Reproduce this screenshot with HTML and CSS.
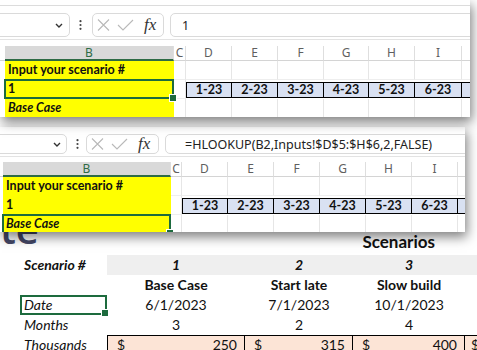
FILE: index.html
```html
<!DOCTYPE html>
<html lang="en">

<head>
    <meta charset="UTF-8">
    <meta name="viewport" content="width=device-width, initial-scale=1.0">
    <title>Scenarios</title>
    <link rel="stylesheet" href="styles.css">
</head>

<body>
    <!-- the sheet underneath -->
    <div class="sheet">
        <div class="sheet-head">
            <span class="logo">te</span>
            <span class="sheet-title">Scenarios</span>
        </div>

        <div class="scen-table">
            <div></div>
            <div class="label bold italic">Scenario #</div>
            <div class="band bold italic center">1</div>
            <div class="band bold italic center">2</div>
            <div class="band bold italic center">3</div>
            <div class="band"></div>

            <div></div>
            <div></div>
            <div class="bold center">Base Case</div>
            <div class="bold center">Start late</div>
            <div class="bold center">Slow build</div>
            <div></div>

            <div></div>
            <div class="label italic picked">Date</div>
            <div class="center">6/1/2023</div>
            <div class="center">7/1/2023</div>
            <div class="center">10/1/2023</div>
            <div></div>

            <div></div>
            <div class="label italic">Months</div>
            <div class="center">3</div>
            <div class="center">2</div>
            <div class="center">4</div>
            <div></div>

            <div></div>
            <div class="label italic">Thousands</div>
            <div class="money first"><span>$</span><span>250</span></div>
            <div class="money"><span>$</span><span>315</span></div>
            <div class="money"><span>$</span><span>400</span></div>
            <div class="money"><span>$</span></div>
        </div>
    </div>

    <!-- first excel snip -->
    <div class="snip snip-one">
        <div class="ribbon-edge"></div>
        <div class="formula-bar">
            <div class="name-box">
                <svg width="8" height="5" viewBox="0 0 8 5"><path d="M1 1l3 3 3-3" fill="none" stroke="#333" stroke-width="1.4" /></svg>
            </div>
            <div class="bar-dots">
                <svg width="3" height="10" viewBox="0 0 3 10"><circle cx="1.5" cy="1.2" r="1.1" fill="#444" /><circle cx="1.5" cy="5" r="1.1" fill="#444" /><circle cx="1.5" cy="8.8" r="1.1" fill="#444" /></svg>
            </div>
            <div class="fx-box">
                <svg width="13" height="12" viewBox="0 0 13 12"><path d="M1 0.5l11 11M12 0.5l-11 11" stroke="#b9b9b9" stroke-width="1.1" /></svg>
                <svg width="17" height="12" viewBox="0 0 17 12"><path d="M1 6l5 5 10-10" fill="none" stroke="#b9b9b9" stroke-width="1.1" /></svg>
                <span class="fx">fx</span>
            </div>
            <div class="formula-input">1</div>
        </div>

        <div class="grid">
            <div class="col-head"></div>
            <div class="col-head active">B</div>
            <div class="col-head">C</div>
            <div class="col-head">D</div>
            <div class="col-head">E</div>
            <div class="col-head">F</div>
            <div class="col-head">G</div>
            <div class="col-head">H</div>
            <div class="col-head">I</div>
            <div class="col-head">J</div>

            <div class="cell lead"></div>
            <div class="cell yellow bold">Input your scenario #</div>
            <div class="cell"></div><div class="cell"></div><div class="cell"></div><div class="cell"></div>
            <div class="cell"></div><div class="cell"></div><div class="cell"></div><div class="cell"></div>

            <div class="cell lead"></div>
            <div class="cell yellow bold selected">1</div>
            <div class="cell"></div>
            <div class="tag first">1-23</div>
            <div class="tag">2-23</div>
            <div class="tag">3-23</div>
            <div class="tag">4-23</div>
            <div class="tag">5-23</div>
            <div class="tag">6-23</div>
            <div class="tag">7-23</div>

            <div class="cell lead"></div>
            <div class="cell yellow bold italic">Base Case</div>
            <div class="cell"></div><div class="cell"></div><div class="cell"></div><div class="cell"></div>
            <div class="cell"></div><div class="cell"></div><div class="cell"></div><div class="cell"></div>
        </div>
    </div>

    <!-- second excel snip -->
    <div class="snip snip-two">
        <div class="formula-bar">
            <div class="name-box">
                <svg width="8" height="5" viewBox="0 0 8 5"><path d="M1 1l3 3 3-3" fill="none" stroke="#333" stroke-width="1.4" /></svg>
            </div>
            <div class="bar-dots">
                <svg width="3" height="10" viewBox="0 0 3 10"><circle cx="1.5" cy="1.2" r="1.1" fill="#444" /><circle cx="1.5" cy="5" r="1.1" fill="#444" /><circle cx="1.5" cy="8.8" r="1.1" fill="#444" /></svg>
            </div>
            <div class="fx-box">
                <svg width="13" height="12" viewBox="0 0 13 12"><path d="M1 0.5l11 11M12 0.5l-11 11" stroke="#b9b9b9" stroke-width="1.1" /></svg>
                <svg width="17" height="12" viewBox="0 0 17 12"><path d="M1 6l5 5 10-10" fill="none" stroke="#b9b9b9" stroke-width="1.1" /></svg>
                <span class="fx">fx</span>
            </div>
            <div class="formula-input">=HLOOKUP(B2,Inputs!$D$5:$H$6,2,FALSE)</div>
        </div>

        <div class="grid">
            <div class="col-head"></div>
            <div class="col-head active">B</div>
            <div class="col-head">C</div>
            <div class="col-head">D</div>
            <div class="col-head">E</div>
            <div class="col-head">F</div>
            <div class="col-head">G</div>
            <div class="col-head">H</div>
            <div class="col-head">I</div>
            <div class="col-head">J</div>

            <div class="cell lead"></div>
            <div class="cell yellow bold">Input your scenario #</div>
            <div class="cell"></div><div class="cell"></div><div class="cell"></div><div class="cell"></div>
            <div class="cell"></div><div class="cell"></div><div class="cell"></div><div class="cell"></div>

            <div class="cell lead"></div>
            <div class="cell yellow bold">1</div>
            <div class="cell"></div>
            <div class="tag first">1-23</div>
            <div class="tag">2-23</div>
            <div class="tag">3-23</div>
            <div class="tag">4-23</div>
            <div class="tag">5-23</div>
            <div class="tag">6-23</div>
            <div class="tag">7-23</div>

            <div class="cell lead"></div>
            <div class="cell yellow bold italic selected">Base Case</div>
            <div class="cell"></div><div class="cell"></div><div class="cell"></div><div class="cell"></div>
            <div class="cell"></div><div class="cell"></div><div class="cell"></div><div class="cell"></div>
        </div>
    </div>
</body>

</html>
```

FILE: styles.css
```css
* {
    box-sizing: border-box;
    margin: 0;
    padding: 0;
}

body {
    position: relative;
    width: 477px;
    height: 350px;
    overflow: hidden;
    background-color: white;
    font-family: Lato, "Liberation Sans", sans-serif;
    color: #111;
}

.bold {
    font-weight: bold;
}

.italic {
    font-style: italic;
}

.center {
    text-align: center;
}

/* sheet underneath */

.sheet {
    padding-top: 214px;
}

.sheet-head {
    display: flex;
    align-items: flex-start;
    height: 41px;
}

.logo {
    font-family: "Open Sans", sans-serif;
    font-weight: 600;
    font-size: 40px;
    line-height: 30px;
    color: #444766;
}

.sheet-title {
    margin-left: auto;
    margin-right: 42px;
    margin-top: 18px;
    font-size: 17px;
    line-height: 20px;
    font-weight: bold;
}

.scen-table {
    display: grid;
    grid-template-columns: 20px 87px 138px 108px 112px 12px;
    grid-auto-rows: 20px;
    font-size: 14px;
    line-height: 20px;
}

.scen-table .label {
    padding-left: 4px;
    white-space: nowrap;
}

.band {
    background-color: #efefef;
}

.picked {
    border: 2px solid #1d6b3e;
    line-height: 16px;
    padding-left: 2px !important;
    position: relative;
}

.picked::after {
    content: "";
    position: absolute;
    right: -4px;
    bottom: -4px;
    width: 6px;
    height: 6px;
    background-color: #1d6b3e;
    border: 1px solid white;
}

.money {
    display: flex;
    justify-content: space-between;
    padding: 0 7px 0 9px;
    background-color: #fce4d6;
    border: 1px solid #000;
    border-left: none;
    line-height: 18px;
    white-space: nowrap;
}

.money.first {
    border-left: 1px solid #000;
}

.money:last-child {
    padding-left: 6px;
}

/* excel snips */

.snip {
    position: absolute;
    left: 0;
    background-color: white;
    overflow: hidden;
    box-shadow: 2px 5px 11px rgba(0, 0, 0, 0.5);
}

.snip-one {
    top: 0;
    width: 470px;
    height: 117px;
    z-index: 2;
}

.snip-two {
    top: 127px;
    width: 465px;
    height: 105px;
    z-index: 1;
}

.ribbon-edge {
    height: 6px;
    border-bottom: 1px solid #dcdcdc;
}

.formula-bar {
    display: flex;
    align-items: center;
    padding: 7px 0 2px;
    border-bottom: 1px solid #e3e3e3;
    font-family: "Noto Sans", sans-serif;
    font-size: 12.5px;
}

.name-box,
.fx-box,
.formula-input {
    display: flex;
    align-items: center;
    height: 24px;
    border: 1px solid #dadada;
    border-radius: 5px;
    background-color: white;
}

.snip-two .name-box,
.snip-two .fx-box,
.snip-two .formula-input {
    height: 20px;
}

.name-box {
    justify-content: flex-end;
    width: 76px;
    margin-left: -6px;
    padding-right: 6px;
}

.snip-two .name-box {
    width: 73px;
    padding-right: 5px;
}

.bar-dots {
    display: flex;
    margin-left: 9px;
    width: 3px;
}

.fx-box {
    width: 72px;
    margin-left: 10px;
    padding-left: 4px;
    gap: 7px;
}

.snip-two .fx-box {
    width: 73px;
    margin-left: 7px;
}

.fx {
    font-family: "Liberation Serif", serif;
    font-style: italic;
    font-size: 17px;
    color: #333;
    margin-left: 3px;
}

.formula-input {
    flex: 1;
    margin-left: 6px;
    margin-right: -20px;
    padding-left: 11px;
    color: #222;
    white-space: nowrap;
}

.snip-two .formula-input {
    padding-left: 19px;
}

.grid {
    display: grid;
    grid-template-columns: 5px 169px 12px 46px 46px 46px 45px 46px 47px 46px;
    grid-template-rows: 15px 19px 19px 19px;
    padding-top: 6px;
    font-size: 12.5px;
}

.snip-two .grid {
    grid-template-columns: 3px 168px 11px 46px 46px 46px 46px 46px 46px 46px;
    padding-top: 5px;
}

.col-head {
    font-family: "Noto Sans", sans-serif;
    font-size: 12px;
    line-height: 14px;
    text-align: center;
    color: #5f5f5f;
    border-right: 1px solid #dedede;
    border-bottom: 1px solid #d4d4d4;
}

.col-head:first-child {
    border-right: none;
}

.col-head.active {
    background-color: #d9d9d9;
    color: #2e6b45;
    border-bottom: 2px solid #2e6b45;
    line-height: 13px;
}

.cell {
    border-right: 1px solid #e6e6e6;
    border-bottom: 1px solid #eeeeee;
    line-height: 18px;
    white-space: nowrap;
    overflow: hidden;
}

.cell.lead {
    border: none;
}

.yellow {
    background-color: #ffff00;
    border-color: #ffff00;
    padding-left: 3px;
}

.selected {
    position: relative;
    overflow: visible;
}

.selected::after {
    content: "";
    position: absolute;
    inset: -1px;
    border: 2px solid #1d6b3e;
}

.selected::before {
    content: "";
    position: absolute;
    right: -4px;
    bottom: -4px;
    width: 6px;
    height: 6px;
    background-color: #1d6b3e;
    border: 1px solid white;
    z-index: 1;
}

.tag {
    margin: 2px 0 1px;
    background-color: #d9e1f2;
    border: 1px solid #000;
    border-left: none;
    text-align: center;
    font-weight: bold;
    line-height: 14px;
    white-space: nowrap;
    overflow: hidden;
}

.tag.first {
    border-left: 1px solid #000;
}
```
